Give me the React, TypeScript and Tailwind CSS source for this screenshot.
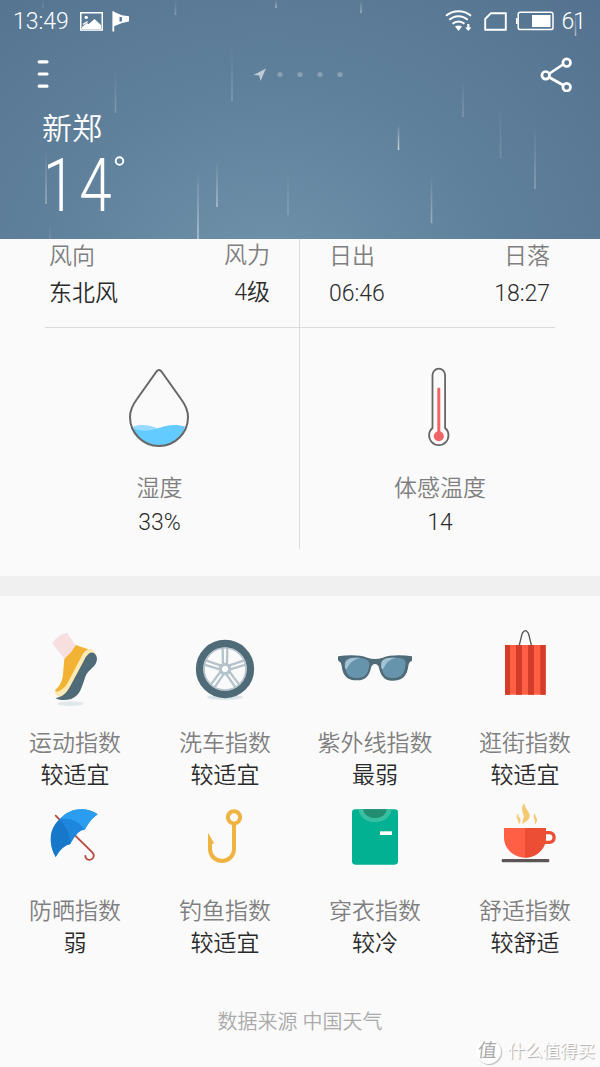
import type { ReactNode } from "react";

// x, top, bottom, opacity of every rain streak in the header
const drops = [
  [43, 0, 8, 0.15],
  [175.5, 0, 15, 0.25],
  [276, 0, 8, 0.45],
  [361, 0, 13, 0.4],
  [575.5, 12, 36, 0.5],
  [115.5, 68, 113, 0.2],
  [232, 46, 101, 0.2],
  [463, 78, 117, 0.2],
  [46, 148, 204, 0.35],
  [50, 222, 239, 0.12],
  [198, 170, 239, 0.5],
  [217, 160, 207, 0.45],
  [288, 170, 215, 0.18],
  [398.5, 124, 150, 0.65],
  [431.5, 174, 223, 0.35],
  [500.5, 104, 158, 0.15],
  [535, 124, 189, 0.28],
];

function Rain() {
  return (
    <svg className="absolute inset-0" width="600" height="239" viewBox="0 0 600 239">
      <defs>
        <linearGradient id="drop" x1="0" y1="0" x2="0" y2="1">
          <stop offset="0" stopColor="#fff" stopOpacity="0" />
          <stop offset="1" stopColor="#fff" />
        </linearGradient>
      </defs>
      {drops.map(([x, top, bottom, opacity]) => (
        <rect key={x} x={x - 0.8} y={top} width="1.6" height={bottom - top} fill="url(#drop)" opacity={opacity} />
      ))}
    </svg>
  );
}

function StatusBar() {
  return (
    <div className="flex h-[42px] items-center pl-[13px] pr-[15px] text-[23px] leading-none">
      <span>13:49</span>
      <svg className="ml-[11px]" width="23" height="19" viewBox="0 0 23 19">
        <rect x="0.75" y="0.75" width="21.5" height="17.3" fill="none" stroke="#fff" strokeWidth="1.5" />
        <path d="M2 17v-2l5-4 1.5 1.2L14.5 7l6.5 6v4z" fill="#fff" />
        <path d="M3 12.5l4.5-3" stroke="#fff" strokeWidth="1.5" />
        <circle cx="6.2" cy="5.4" r="1.7" fill="#fff" />
      </svg>
      <svg className="ml-[9px]" width="18" height="21" viewBox="0 0 18 21">
        <path d="M1.3 0.3V20.5" stroke="#fff" strokeWidth="1.8" />
        <path fillRule="evenodd" d="M1 0.5L10 4.2 17 5.2V10.5L10 12 1.5 15.5zM7.5 5.7v5l2.5-.5V6.2z" fill="#fff" />
      </svg>
      <div className="ml-auto flex items-center">
        <svg width="27" height="22" viewBox="0 0 27 22">
          <g fill="none" stroke="#fff" strokeWidth="2">
            <path d="M1 5.8C8 -0.4 19 -0.4 26 5.8" />
            <path d="M4.3 9.8C9.7 5 17.3 5 22.7 9.8" />
            <path d="M7.6 13.7C11 10.7 16 10.7 19.4 13.7" />
          </g>
          <path d="M10 16.6q3.5-2.4 7 0L13.5 21z" fill="#fff" />
          <path d="M22.2 14h2.2v3.6h2L23.3 21l-3.1-3.4h2z" fill="#fff" />
        </svg>
        <svg className="ml-[12px]" width="23" height="19" viewBox="0 0 23 19">
          <path d="M7 1.2H21.8V17.8H1.2V7z" fill="none" stroke="#fff" strokeWidth="1.9" />
        </svg>
        <svg className="ml-[9px]" width="38" height="20" viewBox="0 0 38 20">
          <rect x="2.2" y="1.2" width="34.8" height="17.4" rx="2.2" fill="none" stroke="#fff" strokeWidth="1.5" />
          <path d="M0.8 7v6" stroke="#fff" strokeWidth="1.6" />
          <rect x="16" y="4" width="18.5" height="12" fill="#fff" />
        </svg>
        <span className="ml-[7px] tracking-[-1px]">61</span>
      </div>
    </div>
  );
}

function Header() {
  return (
    <header className="relative h-[239px] bg-[radial-gradient(ellipse_at_45%_115%,#7192ab_0%,#5f809a_50%,#54728f_100%)] text-white">
      <Rain />
      <div className="relative">
        <StatusBar />
        <div className="flex h-[64px] items-center justify-between pl-[37px] pr-[27px]">
          <svg width="12" height="30" viewBox="0 0 12 30">
            <path d="M2.2 2.8h7.8M2.2 15h7.8M2.2 27.2h7.8" stroke="#fff" strokeWidth="3.2" strokeLinecap="round" />
          </svg>
          <svg className="ml-[6px]" width="92" height="16" viewBox="0 0 92 16" fill="#fff">
            <path d="M14 2.5L1.500 9l5.700.6L8.500 15z" opacity="0.6" />
            <g opacity="0.25">
              <circle cx="28" cy="8.5" r="2.6" />
              <circle cx="48" cy="8.5" r="2.6" />
              <circle cx="68" cy="8.5" r="2.6" />
              <circle cx="88" cy="8.5" r="2.6" />
            </g>
          </svg>
          <svg width="33" height="36" viewBox="0 0 33 36" fill="none" stroke="#fff" strokeWidth="2.7">
            <path d="M9.500 17.500L23 8.500M9.500 21.500L23 29" />
            <circle cx="5.7" cy="19.3" r="3.8" />
            <circle cx="26.7" cy="6.7" r="3.8" />
            <circle cx="26.7" cy="31.2" r="3.8" />
          </svg>
        </div>
        <div className="pl-[42px] pt-px">
          <div className="text-[30px] leading-[44px]">新郑</div>
          <div className="flex h-[68px] items-start pl-px">
            <span className="w-[70px] origin-left scale-x-[0.78] text-[75px] leading-[68px] tracking-[5px]">14</span>
            <svg className="mt-[4px]" width="12" height="12" viewBox="0 0 12 12">
              <circle cx="6.5" cy="6" r="3.8" fill="none" stroke="#fff" strokeWidth="1.9" />
            </svg>
          </div>
        </div>
      </div>
    </header>
  );
}

function Pair({ label, value, className = "pt-[2px]" }: { label: string; value: string; className?: string }) {
  return (
    <div className={className}>
      <div className="leading-8 text-[#7f7f7f]">{label}</div>
      <div className="mt-[5px] leading-8">{value}</div>
    </div>
  );
}

function Gauge({ label, value, children }: { label: string; value: string; children: ReactNode }) {
  return (
    <div className="flex flex-1 flex-col items-center pt-[37px]">
      {children}
      <div className="mt-[23px] leading-[34px] text-[#7f7f7f]">{label}</div>
      <div className="leading-[34px]">{value}</div>
    </div>
  );
}

function Details() {
  return (
    <section className="h-[337px]">
      <div className="flex h-[88px] px-5">
        <div className="flex w-[280px] justify-between border-r border-[#dcdcdc] px-[29px]">
          <Pair label="风向" value="东北风" />
          <Pair label="风力" value="4级" className="pt-px text-right" />
        </div>
        <div className="flex w-[280px] justify-between pl-[29px] pr-[30px]">
          <Pair label="日出" value="06:46" />
          <Pair label="日落" value="18:27" className="pt-[2px] text-right" />
        </div>
      </div>
      <div className="mx-[45px] h-px bg-[#dcdcdc]" />
      <div className="flex h-[221px] px-5">
        <div className="flex w-[280px] border-r border-[#dcdcdc]">
          <Gauge label="湿度" value="33%">
            <svg className="mr-px" width="64" height="84" viewBox="0 0 64 84">
              <path d="M5.5 62C13 59 21 60 27 62L32 64 30 70H8z" fill="#97daff" />
              <path d="M5.3 63C14 67 23 66 32 63 41 59.5 50 59 58 61.5 55 73 45 80.5 32 80.5S8.5 74 5.3 63z" fill="#63cbff" />
              <path
                d="M29.5 6.5Q32 3.5 34.5 6.5L54 34C58.5 40 61 46 61 52 61 68 48 81 32 81S3 68 3 52C3 46 5.5 40 10 34z"
                fill="none"
                stroke="#666"
                strokeWidth="2"
              />
            </svg>
          </Gauge>
        </div>
        <div className="flex w-[280px]">
          <Gauge label="体感温度" value="14">
            <svg className="mr-[2px]" width="24" height="84" viewBox="0 0 24 84">
              <path
                d="M5.5 63V10a6.3 6.3 0 0 1 12.6 0V63A9.7 9.7 0 1 1 5.5 63z"
                fill="none"
                stroke="#666"
                strokeWidth="1.8"
              />
              <path d="M11.8 24V70" stroke="#ef6464" strokeWidth="3" strokeLinecap="round" />
              <circle cx="11.8" cy="71.2" r="5" fill="#ef6464" />
            </svg>
          </Gauge>
        </div>
      </div>
    </section>
  );
}

function Shoe() {
  return (
    <svg width="150" height="104" viewBox="-60 9 450 312">
      <ellipse cx="152" cy="251" rx="39" ry="7" fill="#e1e8eb" />
      <path d="M97 70Q112 44 141 38L169 79 134 118z" fill="#f8dfdf" />
      <path d="M168 75C184 82 200 86 214 90L210 118 127 227 104 212C120 198 130 180 130 150L133 117Q155 98 168 75z" fill="#f2b233" />
      <path d="M205 88Q218 84 224 98L128 235Q108 232 104 216C120 215 136 202 143 188L185 108Q193 91 205 88z" fill="#fce9b4" />
      <path d="M206 101C219 92 231 103 231 117 230 142 204 147 196 170 184 205 181 224 154 237 134 243 113 240 106 234 130 232 144 212 153 194L190 125Q197 108 206 101z" fill="#4f6b77" />
    </svg>
  );
}

function Wheel() {
  return (
    <svg width="150" height="104" viewBox="390 9 450 312">
      <ellipse cx="615" cy="232" rx="54" ry="8" fill="#dce5ea" />
      <circle cx="615" cy="147" r="76" fill="#fafafa" stroke="#4f6b77" strokeWidth="23" />
      <circle cx="615" cy="147" r="63" fill="none" stroke="#b5c3cb" strokeWidth="5" />
      <g stroke="#b5c3cb" strokeWidth="7">
        {[0, 72, 144, 216, 288].map((angle) => (
          <path key={angle} d="M609 135L608 84M621 135L622 84" transform={`rotate(${angle} 615 147)`} />
        ))}
      </g>
      <circle cx="615" cy="147" r="14" fill="#fff" stroke="#b5c3cb" strokeWidth="10" />
    </svg>
  );
}

function Sunglasses() {
  return (
    <svg width="150" height="104" viewBox="-60 9 450 312">
      <path d="M54 109C85 104 120 104 142 113Q165 121 188 113C210 104 245 104 276 109V122Q266 126 265 138C261 171 244 182 217 182 191 182 181 163 177 143Q174 132 165 132T153 143C148 166 137 181 112 181 84 181 69 171 65 138Q63 126 54 121z" fill="#4f6b77" />
      <path d="M74 129Q75 113 104 113C135 113 150 119 148 135 145 161 135 174 111 174 84 174 76 160 74 129zM183 134C180 119 197 113 228 113Q257 113 257 129C255 160 245 174 219 174 195 174 186 160 183 134z" fill="#6794ad" />
      <path d="M75 145Q71 114 104 113H122Q91 120 80 147zM184 145Q178 114 211 113H229Q199 120 190 147z" fill="#a3c3d4" />
    </svg>
  );
}

function ShoppingBag() {
  return (
    <svg width="150" height="104" viewBox="390 9 450 312">
      <path d="M597 79L606 42Q616 22 626 42L635 79" fill="none" stroke="#555" strokeWidth="4" />
      <rect x="555" y="75" width="122" height="149" rx="2" fill="#ff5f45" />
      <path d="M555 75h15v149h-15zM588 75h18v149h-18zM624 75h18v149h-18zM661 75h16v149h-16z" fill="#d23c28" />
    </svg>
  );
}

function Umbrella() {
  return (
    <svg width="150" height="104" viewBox="-60 3 450 312">
      <path d="M107 77L121 91M165 136L217 187C231 202 208 219 197 203L196 198" fill="none" stroke="#b94a40" strokeWidth="5.5" strokeLinecap="round" />
      <path d="M119 88C151 52 199 50 233 73Q213 86 194 119 174 117 151 162 127 165 107 201C84 162 89 119 119 88z" fill="#1e86dd" />
      <path d="M119 88C151 52 199 50 233 73Q211 86 194 119C175 91 147 83 119 88z" fill="#2b9df0" />
      <path d="M119 88C84 119 87 162 107 201Q125 168 151 162C150 131 135 107 119 88z" fill="#1778ca" />
    </svg>
  );
}

function Hook() {
  return (
    <svg width="150" height="104" viewBox="390 3 450 312">
      <g fill="none" stroke="#efb341" strokeWidth="12">
        <circle cx="642" cy="82" r="18.5" />
        <path d="M642 101V177A36 36 0 0 1 570 177V150" />
      </g>
      <path d="M564 128L583 161H575V166H564z" fill="#efb341" />
    </svg>
  );
}

function Shirt() {
  return (
    <svg width="150" height="104" viewBox="-60 3 450 312">
      <rect x="96" y="58" width="138" height="166" rx="10" fill="#02b092" />
      <path d="M116 58A49 39 0 0 0 214 58z" fill="#38bea0" />
      <path d="M130 58A35 26 0 0 0 200 58z" fill="#238d72" />
      <rect x="180" y="124" width="36" height="11" fill="#fff" />
    </svg>
  );
}

function Cup() {
  return (
    <svg width="150" height="104" viewBox="390 3 450 312">
      <path d="M612 38C597 63 616 71 610 84L606 102C625 92 635 83 626 67 620 56 614 51 612 38zM594 70C583 83 598 88 596 104 606 91 601 84 596 80zM645 70C634 83 649 88 644 104 655 93 651 84 647 80z" fill="#f4ca71" />
      <path d="M674 128H688C707 128 707 157 688 157H670" fill="none" stroke="#ec4e35" strokeWidth="10" />
      <path d="M552 114H678V142C678 176 650 203 615 203S552 176 552 142z" fill="#ff5f45" />
      <path d="M615 114H678V142C678 176 650 203 615 203z" fill="#ec4e35" />
      <rect x="545" y="207" width="143" height="10" rx="4" fill="#5d5555" />
    </svg>
  );
}

const indices = [
  { label: "运动指数", value: "较适宜", Icon: Shoe },
  { label: "洗车指数", value: "较适宜", Icon: Wheel },
  { label: "紫外线指数", value: "最弱", Icon: Sunglasses },
  { label: "逛街指数", value: "较适宜", Icon: ShoppingBag },
  { label: "防晒指数", value: "弱", Icon: Umbrella },
  { label: "钓鱼指数", value: "较适宜", Icon: Hook },
  { label: "穿衣指数", value: "较冷", Icon: Shirt },
  { label: "舒适指数", value: "较舒适", Icon: Cup },
];

export default function App() {
  return (
    <div className="flex h-[1067px] w-[600px] flex-col overflow-hidden bg-[#fafafa] font-['Roboto','Noto_Sans_CJK_SC',sans-serif] text-[23px] font-[350] text-[#2a2a2a]">
      <Header />
      <Details />
      <div className="h-5 bg-[#f0f0f0]" />

      <section className="grid grid-cols-4 pt-[27px] text-center leading-8">
        {indices.map(({ label, value, Icon }) => (
          <div key={label} className="h-[168px]">
            <Icon />
            <div className="pt-px text-[#7f7f7f]">{label}</div>
            <div>{value}</div>
          </div>
        ))}
      </section>

      <footer className="mt-[47px] text-center text-[20px] leading-8 text-[#aaa]">数据来源 中国天气</footer>

      <div className="flex items-center justify-end gap-[7px] pr-[5px] text-[17.5px] leading-[26px] text-white">
        <span className="flex size-[25px] items-center justify-center rounded-full bg-white text-[19px] font-normal text-[#aaa] shadow-[1px_1px_1px_#bbb]">
          <span className="-skew-x-6">值</span>
        </span>
        <span className="font-normal [text-shadow:1px_1px_1px_#aaa]">什么值得买</span>
      </div>
    </div>
  );
}
